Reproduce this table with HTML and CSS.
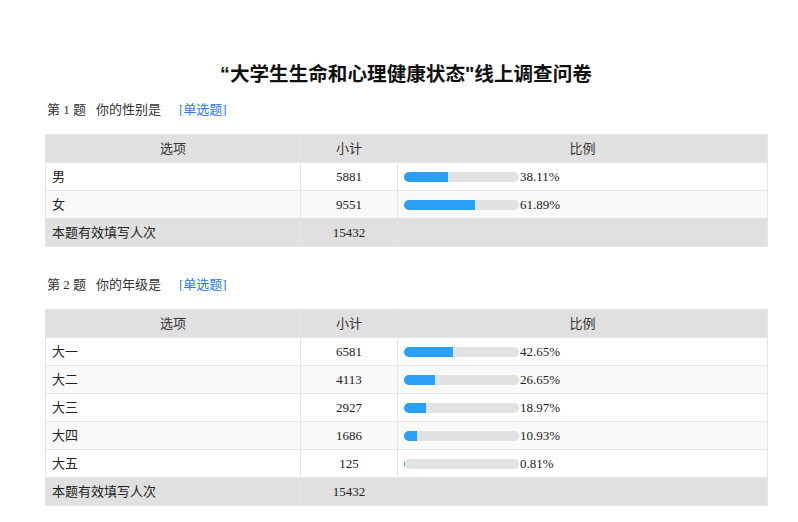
FILE: index.html
```html
<!DOCTYPE html>
<html lang="zh-CN">
<head>
<meta charset="utf-8">
<title>问卷统计</title>
<link rel="stylesheet" href="styles.css">
</head>
<body>
<div class="page">
  <h1 class="title">“大学生生命和心理健康状态"线上调查问卷</h1>

  <div class="question">
    <span class="qno">第 1 题</span><span class="qtext">你的性别是</span><span class="qtype">[单选题]</span>
  </div>
  <table class="stats">
    <colgroup><col class="c1"><col class="c2"><col class="c3"></colgroup>
    <thead>
      <tr><th>选项</th><th>小计</th><th>比例</th></tr>
    </thead>
    <tbody>
      <tr><td class="opt">男</td><td class="num">5881</td><td class="pct"><span class="track"><span class="fill" style="width:38.11%"></span></span><span class="pv">38.11%</span></td></tr>
      <tr class="alt"><td class="opt">女</td><td class="num">9551</td><td class="pct"><span class="track"><span class="fill" style="width:61.89%"></span></span><span class="pv">61.89%</span></td></tr>
      <tr class="total"><td class="opt">本题有效填写人次</td><td class="num">15432</td><td></td></tr>
    </tbody>
  </table>

  <div class="question q2">
    <span class="qno">第 2 题</span><span class="qtext">你的年级是</span><span class="qtype">[单选题]</span>
  </div>
  <table class="stats">
    <colgroup><col class="c1"><col class="c2"><col class="c3"></colgroup>
    <thead>
      <tr><th>选项</th><th>小计</th><th>比例</th></tr>
    </thead>
    <tbody>
      <tr><td class="opt">大一</td><td class="num">6581</td><td class="pct"><span class="track"><span class="fill" style="width:42.65%"></span></span><span class="pv">42.65%</span></td></tr>
      <tr class="alt"><td class="opt">大二</td><td class="num">4113</td><td class="pct"><span class="track"><span class="fill" style="width:26.65%"></span></span><span class="pv">26.65%</span></td></tr>
      <tr><td class="opt">大三</td><td class="num">2927</td><td class="pct"><span class="track"><span class="fill" style="width:18.97%"></span></span><span class="pv">18.97%</span></td></tr>
      <tr class="alt"><td class="opt">大四</td><td class="num">1686</td><td class="pct"><span class="track"><span class="fill" style="width:10.93%"></span></span><span class="pv">10.93%</span></td></tr>
      <tr><td class="opt">大五</td><td class="num">125</td><td class="pct"><span class="track"><span class="fill" style="width:0.81%"></span></span><span class="pv">0.81%</span></td></tr>
      <tr class="total"><td class="opt">本题有效填写人次</td><td class="num">15432</td><td></td></tr>
    </tbody>
  </table>
</div>
</body>
</html>
```

FILE: styles.css
```css
html, body {
  margin: 0;
  padding: 0;
  background: #ffffff;
}

body {
  font-family: "Liberation Serif", "Noto Sans CJK SC", serif;
  font-size: 13px;
  color: #333333;
}

.page {
  width: 722px;
  padding: 0 31px 0 45px;
}

.title {
  margin: 60px 0 0 0;
  font-family: "Liberation Sans", "Noto Sans CJK SC", sans-serif;
  font-size: 19.6px;
  font-weight: bold;
  line-height: 28px;
  text-align: center;
  color: #111111;
}

.question {
  margin-top: 12px;
  padding-left: 2px;
  line-height: 20px;
  height: 20px;
  color: #333333;
}

.question.q2 {
  margin-top: 28px;
}

.qtext {
  margin-left: 10px;
}

.qtype {
  margin-left: 18px;
  color: #2a78ee;
}

.stats {
  margin-top: 14px;
  width: 722px;
  border-collapse: collapse;
  table-layout: fixed;
}

.c1 { width: 255px; }
.c2 { width: 97px; }
.c3 { width: 370px; }

.stats th,
.stats td {
  border: 1px solid #e6e6e6;
  height: 27px;
  line-height: 27px;
  padding: 0 6px;
  font-size: 13px;
  white-space: nowrap;
}

.stats th {
  background: #e0e0e0;
  font-weight: normal;
  text-align: center;
  color: #333333;
}

.stats tbody tr {
  background: #ffffff;
}

.stats tbody tr.alt {
  background: #f9f9f9;
}

.stats tbody tr.total {
  background: #e0e0e0;
}

.opt {
  text-align: left;
  color: #222222;
}

.num {
  text-align: center;
  color: #222222;
}

.pct {
  text-align: left;
  color: #222222;
}

.track {
  display: inline-block;
  width: 115px;
  height: 10px;
  border-radius: 5px;
  background: #e2e2e2;
  overflow: hidden;
  vertical-align: -1px;
}

.fill {
  display: block;
  height: 100%;
  background: #2aa0f5;
}

.pv {
  margin-left: 1px;
}
```
